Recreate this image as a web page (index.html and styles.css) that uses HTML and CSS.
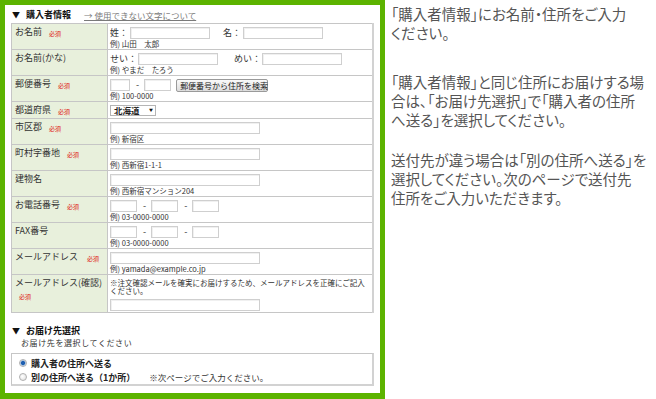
FILE: index.html
```html
<!DOCTYPE html>
<html lang="ja">
<head>
  <meta charset="UTF-8">
  <meta name="viewport" content="width=device-width, initial-scale=1.0">
  <title>購入者情報の入力</title>
  <link rel="stylesheet" href="styles.css">
</head>
<body>
  <div class="page">
    <div class="frame">
      <div class="sec-title">
        <span class="tri">▼</span><b>購入者情報</b>
        <a class="ng-link" href="#">→ 使用できない文字について</a>
      </div>
      <table class="form-table">
        <colgroup><col class="col-label"><col></colgroup>
        <tr>
          <th>お名前<span class="req">必須</span></th>
          <td>
            <div class="line">姓：<input class="in-name" type="text"><span class="sub-label">名：</span><input class="in-name" type="text"></div>
            <div class="ex">例) 山田　太郎</div>
          </td>
        </tr>
        <tr>
          <th>お名前(かな)</th>
          <td>
            <div class="line">せい：<input class="in-kana" type="text"><span class="sub-label kana">めい：</span><input class="in-kana" type="text"></div>
            <div class="ex">例) やまだ　たろう</div>
          </td>
        </tr>
        <tr>
          <th>郵便番号<span class="req">必須</span></th>
          <td>
            <div class="line"><input class="in-zip1" type="text"><span class="dash">-</span><input class="in-zip2" type="text"><button class="btn-zip" type="button">郵便番号から住所を検索</button></div>
            <div class="ex">例) 100-0000</div>
          </td>
        </tr>
        <tr class="row-pref">
          <th>都道府県<span class="req">必須</span></th>
          <td>
            <span class="select">北海道<i class="caret">▼</i></span>
          </td>
        </tr>
        <tr>
          <th>市区郡<span class="req">必須</span></th>
          <td>
            <div class="line"><input class="in-long" type="text"></div>
            <div class="ex">例) 新宿区</div>
          </td>
        </tr>
        <tr>
          <th>町村字番地<span class="req">必須</span></th>
          <td>
            <div class="line"><input class="in-long" type="text"></div>
            <div class="ex">例) 西新宿1-1-1</div>
          </td>
        </tr>
        <tr>
          <th>建物名</th>
          <td>
            <div class="line"><input class="in-long" type="text"></div>
            <div class="ex">例) 西新宿マンション204</div>
          </td>
        </tr>
        <tr>
          <th>お電話番号<span class="req">必須</span></th>
          <td>
            <div class="line"><input class="in-tel" type="text"><span class="dash">-</span><input class="in-tel" type="text"><span class="dash">-</span><input class="in-tel" type="text"></div>
            <div class="ex">例) 03-0000-0000</div>
          </td>
        </tr>
        <tr>
          <th>FAX番号</th>
          <td>
            <div class="line"><input class="in-tel" type="text"><span class="dash">-</span><input class="in-tel" type="text"><span class="dash">-</span><input class="in-tel" type="text"></div>
            <div class="ex">例) 03-0000-0000</div>
          </td>
        </tr>
        <tr>
          <th>メールアドレス<span class="req req-mail">必須</span></th>
          <td>
            <div class="line"><input class="in-long" type="text"></div>
            <div class="ex">例) yamada@example.co.jp</div>
          </td>
        </tr>
        <tr>
          <th>メールアドレス(確認)<br><span class="req req-own">必須</span></th>
          <td>
            <p class="notice">※注文確認メールを確実にお届けするため、メールアドレスを正確にご記入ください。</p>
            <div class="line"><input class="in-long" type="text"></div>
          </td>
        </tr>
      </table>

      <div class="sec-title sec-dest">
        <span class="tri">▼</span><b>お届け先選択</b>
      </div>
      <p class="dest-help">お届け先を選択してください</p>
      <div class="radio-box">
        <div class="opt"><span class="dot on"></span>購入者の住所へ送る</div>
        <div class="opt"><span class="dot"></span>別の住所へ送る（1か所）<span class="opt-note">※次ページでご入力ください。</span></div>
      </div>
    </div>

    <div class="aside">
      <p class="p1">「購入者情報」にお名前・住所をご入力<br>ください。</p>
      <p class="p2">「購入者情報」と同じ住所にお届けする場<br>合は、「お届け先選択」で「購入者の住所<br>へ送る」を選択してください。</p>
      <p>送付先が違う場合は「別の住所へ送る」を<br>選択してください。次のページで送付先<br>住所をご入力いただきます。</p>
    </div>
  </div>
</body>
</html>
```

FILE: styles.css
```css
body { margin:0; font-family:"Noto Sans CJK JP", "Noto Sans", sans-serif; color:#333; background:#fff; }
.page { display:flex; align-items:flex-start; }

.frame { box-sizing:border-box; width:385px; height:399px; flex-shrink:0;
         border:5px solid #5cb300; border-bottom-width:6px; padding:0 6px; background:#fff; }

.sec-title { display:flex; align-items:center; height:12px; margin:4px 0 2px; padding-left:1px;
             font-size:9px; line-height:12px; color:#111; }
.sec-title .tri { font-size:8px; margin-right:6px; }
.sec-title b { font-weight:bold; }
.ng-link { margin-left:13px; color:#7a7a7a; text-decoration:underline; font-size:8.5px; }

.form-table { width:100%; table-layout:fixed; border-collapse:collapse;
              border:1px solid #c6c6c6; border-right:2px solid #d2d2d2; }
.col-label { width:96px; }
.form-table th, .form-table td { border:1px solid #c6c6c6; vertical-align:top; }
.form-table th { background:#e8f0dc; font-weight:normal; text-align:left;
                 padding:2px 3px 0 3px; font-size:9px; line-height:12px; color:#333; }
.form-table td { padding:3px 3px 1px 2px; font-size:9px; line-height:12px; }

.req { color:#e01010; font-size:6px; margin-left:7px; vertical-align:-1px; }
.req-mail { margin-left:9px; }
.req-own { margin-left:4px; }

.line { display:flex; align-items:center; height:12px; white-space:nowrap; }
.line input { box-sizing:border-box; height:12px; padding:0; margin:0; font-size:9px;
              border:1px solid #cfcfcf; box-shadow:inset 1px 1px 0 #f0f0f0; background:#fff; }
.in-name { width:80px; margin-left:2px !important; }
.in-kana { width:80px; margin-left:1px !important; }
.sub-label { margin-left:13px; }
.sub-label.kana { margin-left:16px; }
.in-zip1 { width:20px; }
.in-zip2 { width:27px; }
.in-tel { width:27px; }
.in-long { width:150px; }
.dash { margin:0 5px 0 6px; font-size:9px; }

.btn-zip { box-sizing:border-box; height:13px; margin-left:5px; padding:0 3px; width:92px;
           font-family:inherit; font-size:8px; line-height:11px; color:#222; white-space:nowrap;
           border:1px solid #9a9a9a; border-radius:2px; background:linear-gradient(#fafafa, #dcdcdc); }

.ex { font-size:7.5px; line-height:9px; color:#333; white-space:nowrap; }

.row-pref td { padding-bottom:1px; }
.select { box-sizing:border-box; display:flex; align-items:center; justify-content:space-between;
          width:46px; height:11px; padding:0 2px 0 3px; border:1px solid #b5b5b5; background:#fff;
          font-size:8.5px; line-height:9px; font-weight:bold; color:#222; }
.caret { font-style:normal; font-size:4px; color:#111; }

.notice { margin:0 0 4px; font-size:7.5px; line-height:8px; color:#333; padding-top:1px; padding-right:4px; }

.sec-dest { margin-top:12px; margin-bottom:0; }
.dest-help { margin:0 0 4px 10px; font-size:8px; line-height:12px; letter-spacing:0.6px; color:#333; }

.radio-box { box-sizing:border-box; height:33px; padding:2px 7px; border:1px solid #c6c6c6;
             border-right:2px solid #d2d2d2; border-bottom:2px solid #d2d2d2; }
.opt { display:flex; align-items:center; height:14px; font-size:9px; font-weight:bold; color:#222; white-space:nowrap; }
.dot { box-sizing:border-box; width:8px; height:8px; border-radius:50%; margin-right:4px;
       border:1px solid #b0b0b0; background:radial-gradient(circle at 40% 40%, #fff, #dcdcdc); }
.dot.on { background:radial-gradient(circle, #1f5fb0 0 1.6px, #9bbbe0 2.4px, #eef2f6 3.4px); }
.opt-note { margin-left:14px; font-weight:normal; font-size:8.5px; color:#333; }

.aside { padding:4px 0 0 6px; font-size:14.5px; line-height:19px; color:#555;
         font-feature-settings:"palt"; white-space:nowrap; }
.aside p { margin:0 0 21px; }
.aside .p1 { margin-bottom:30px; }
```
